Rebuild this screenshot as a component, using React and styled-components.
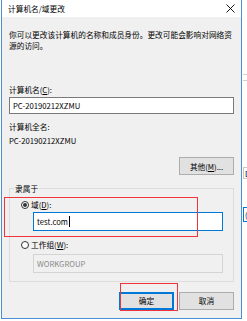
import React from 'react';
import styled, {createGlobalStyle} from 'styled-components';

const GlobalStyle = createGlobalStyle`
    html, body {
        margin: 0;
        padding: 0;
        background: #ffffff;
    }
    body {
        font-family: "Noto Sans CJK SC", "Noto Sans", sans-serif;
        font-size: 7.7px;
        color: #000;
    }
`

const Screen = styled.div`
    display: flex;
    width: 247px;
    height: 321px;
    overflow: hidden;
`

const Dialog = styled.div`
    margin-left: 1px;
    width: 239px;
    height: 318px;
    border: 1px solid #4a8fd6;
    border-top: none;
    display: flex;
    flex-direction: column;
    background: #f0f0f0;
    position: relative;
`

const TitleBar = styled.div`
    height: 17px;
    background: #ffffff;
    display: flex;
    align-items: center;
    justify-content: space-between;
    padding: 0 6px 0 6px;
    line-height: 11px;
`

const Title = styled.span`
    margin-top: 0;
`

const Body = styled.div`
    flex: 1;
    padding: 12px 7px 0 7px;
    display: flex;
    flex-direction: column;
    line-height: 11px;
`

const Text = styled.div`
    margin-top: ${props => props.mt || 0}px;
    color: ${props => props.muted ? '#8a8a8a' : '#000'};
`

const Key = styled.span`
    text-decoration: underline;
    text-underline-offset: 1px;
`

const Input = styled.div`
    margin-top: ${props => props.mt || 0}px;
    margin-left: ${props => props.ml || 0}px;
    width: ${props => props.w ? props.w + 'px' : 'auto'};
    height: ${props => props.h || 17}px;
    box-sizing: border-box;
    background: ${props => props.disabled ? '#f0f0f0' : '#ffffff'};
    border: 1px solid ${props => props.focused ? '#0078d7' : props.disabled ? '#d4d4d4' : '#7a7a7a'};
    color: ${props => props.disabled ? '#8a8a8a' : '#000'};
    display: flex;
    align-items: center;
    padding-left: 3px;
`

const Caret = styled.span`
    display: inline-block;
    width: 1px;
    height: 11px;
    background: #000;
    margin-left: 1px;
`

const ButtonRow = styled.div`
    margin-top: ${props => props.mt || 0}px;
    display: flex;
    justify-content: flex-end;
    gap: 5px;
`

const Button = styled.div`
    width: 55px;
    height: 18px;
    box-sizing: border-box;
    background: #e1e1e1;
    border: ${props => props.primary ? '2px solid #0078d7' : '1px solid #adadad'};
    display: flex;
    align-items: center;
    justify-content: center;
`

const Group = styled.div`
    margin-top: 13px;
    border: 1px solid #dcdcdc;
    padding: 0 0 8px 0;
    display: flex;
    flex-direction: column;
`

const GroupTitle = styled.div`
    margin: -6px 0 0 4px;
    padding: 0 1px;
    background: #f0f0f0;
    align-self: flex-start;
`

const RadioRow = styled.label`
    margin-top: ${props => props.mt || 0}px;
    padding-left: 11px;
    display: flex;
    align-items: center;
    gap: 2px;
`

const Radio = styled.span`
    width: 8px;
    height: 8px;
    box-sizing: border-box;
    border-radius: 50%;
    border: 1px solid #333;
    background: #fff;
    display: flex;
    align-items: center;
    justify-content: center;

    &::after {
        content: '';
        width: 4px;
        height: 4px;
        border-radius: 50%;
        background: ${props => props.checked ? '#333' : 'transparent'};
    }
`

const Mark = styled.div`
    position: absolute;
    left: ${props => props.x}px;
    top: ${props => props.y}px;
    width: ${props => props.w}px;
    height: ${props => props.h}px;
    border: 1.5px solid #f0343c;
    box-sizing: border-box;
    pointer-events: none;
`

const BackWindow = styled.div`
    flex: 1;
    margin-left: 1px;
    background: #ffffff;
    display: flex;
    flex-direction: column;
    line-height: 11px;
    overflow: hidden;
`

const BackLine = styled.div`
    margin-top: ${props => props.mt}px;
    height: 5px;
    border-top: 1px solid #d0d0d0;
    border-bottom: 1px solid #d0d0d0;
`

const BackField = styled.div`
    margin-top: ${props => props.mt}px;
    height: ${props => props.h}px;
    box-sizing: border-box;
    border: 1px solid ${props => props.blue ? '#0078d7' : '#c8c8c8'};
    border-right: none;
    display: flex;
    align-items: center;
    padding-left: 1px;
    white-space: nowrap;
`

const CloseIcon = () => (
    <svg width="9" height="9" viewBox="0 0 9 9">
        <path d="M0.5 0.5 L8.5 8.5 M8.5 0.5 L0.5 8.5" stroke="#000" strokeWidth="0.9" fill="none"/>
    </svg>
)

export default function App() {
    return (<>
        <GlobalStyle/>
        <Screen>
            <Dialog>
                <TitleBar>
                    <Title>计算机名/域更改</Title>
                    <CloseIcon/>
                </TitleBar>
                <Body>
                    <Text>你可以更改该计算机的名称和成员身份。更改可能会影响对网络资源的访问。</Text>
                    <Text mt={33}>计算机名(<Key>C</Key>):</Text>
                    <Input mt={2}>PC-20190212XZMU</Input>
                    <Text mt={7}>计算机全名:</Text>
                    <Text mt={2.5}>PC-20190212XZMU</Text>
                    <ButtonRow mt={11.5}>
                        <Button>其他(<Key>M</Key>)...</Button>
                    </ButtonRow>
                    <Group>
                        <GroupTitle>隶属于</GroupTitle>
                        <RadioRow mt={5}>
                            <Radio checked/>
                            <span>域(<Key>D</Key>):</span>
                        </RadioRow>
                        <Input mt={1.5} ml={23} w={190} h={19} focused>test.com<Caret/></Input>
                        <RadioRow mt={8.5}>
                            <Radio/>
                            <span>工作组(<Key>W</Key>):</span>
                        </RadioRow>
                        <Input mt={3.5} ml={23} w={190} h={19} disabled>WORKGROUP</Input>
                    </Group>
                    <ButtonRow mt={10}>
                        <Button primary>确定</Button>
                        <Button>取消</Button>
                    </ButtonRow>
                </Body>
                <Mark x={2} y={197} w={194} h={40}/>
                <Mark x={118} y={283} w={58} h={28}/>
            </Dialog>
            <BackWindow>
                <BackLine mt={74}/>
                <BackField mt={86} h={12}>D</BackField>
                <BackField mt={28} h={15} blue>(C</BackField>
            </BackWindow>
        </Screen>
    </>);
}
